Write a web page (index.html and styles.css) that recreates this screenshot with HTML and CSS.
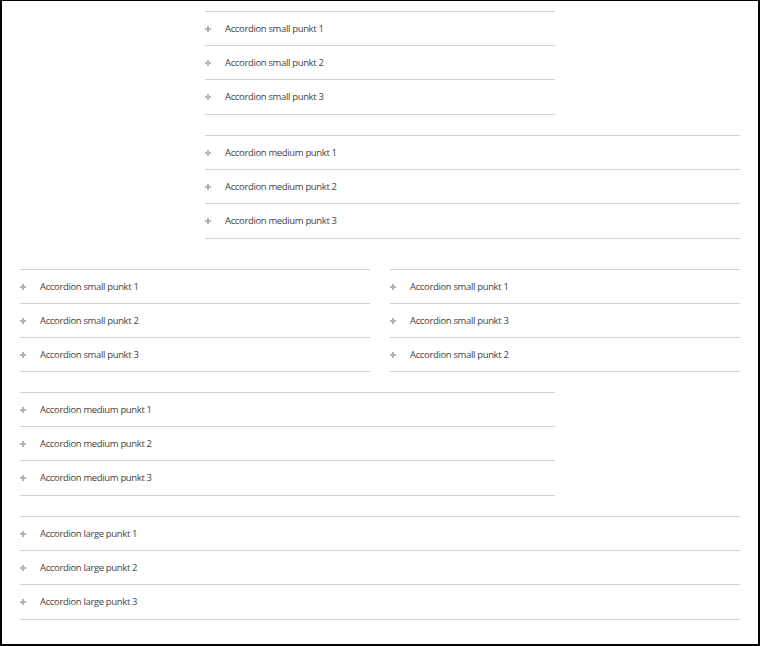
FILE: index.html
```html
<!DOCTYPE html>
<html lang="en">
<head>
    <meta charset="UTF-8">
    <title>Accordion</title>
    <link rel="stylesheet" href="styles.css">
</head>
<body>
    <div class="frame">
        <div class="block-top">
            <ul class="accordion accordion-small">
                <li class="item"><span class="plus"></span>Accordion small punkt 1</li>
                <li class="item"><span class="plus"></span>Accordion small punkt 2</li>
                <li class="item"><span class="plus"></span>Accordion small punkt 3</li>
            </ul>
            <ul class="accordion accordion-medium">
                <li class="item"><span class="plus"></span>Accordion medium punkt 1</li>
                <li class="item"><span class="plus"></span>Accordion medium punkt 2</li>
                <li class="item"><span class="plus"></span>Accordion medium punkt 3</li>
            </ul>
        </div>

        <div class="columns">
            <ul class="accordion">
                <li class="item"><span class="plus"></span>Accordion small punkt 1</li>
                <li class="item"><span class="plus"></span>Accordion small punkt 2</li>
                <li class="item"><span class="plus"></span>Accordion small punkt 3</li>
            </ul>
            <ul class="accordion">
                <li class="item"><span class="plus"></span>Accordion small punkt 1</li>
                <li class="item"><span class="plus"></span>Accordion small punkt 3</li>
                <li class="item"><span class="plus"></span>Accordion small punkt 2</li>
            </ul>
        </div>

        <ul class="accordion accordion-medium">
            <li class="item"><span class="plus"></span>Accordion medium punkt 1</li>
            <li class="item"><span class="plus"></span>Accordion medium punkt 2</li>
            <li class="item"><span class="plus"></span>Accordion medium punkt 3</li>
        </ul>
        <ul class="accordion accordion-large">
            <li class="item"><span class="plus"></span>Accordion large punkt 1</li>
            <li class="item"><span class="plus"></span>Accordion large punkt 2</li>
            <li class="item"><span class="plus"></span>Accordion large punkt 3</li>
        </ul>
    </div>
</body>
</html>
```

FILE: styles.css
```css
html, body {
    margin: 0;
    padding: 0;
    background-color: #fff;
}
body {
    font-family: 'Open Sans', sans-serif;
    color: #444;
}
.frame {
    box-sizing: border-box;
    width: 760px;
    height: 646px;
    border: 2px solid #000;
    border-top-width: 1px;
    padding: 10px 18px 0 18px;
    display: flex;
    flex-direction: column;
    gap: 20px;
}
.block-top {
    display: flex;
    flex-direction: column;
    gap: 20px;
    padding-left: 185px;
    margin-bottom: 10px;
}
.columns {
    display: grid;
    grid-template-columns: 350px 350px;
    gap: 20px;
}
.accordion {
    list-style: none;
    margin: 0;
    padding: 0 0 1px 0;
    border-bottom: 1px solid #d2d2d2;
}
.columns .accordion {
    padding-bottom: 0;
}
.accordion-small {
    width: 350px;
}
.accordion-medium {
    width: 535px;
}
.accordion-large {
    width: 720px;
}
.item {
    box-sizing: border-box;
    height: 34px;
    border-top: 1px solid #d2d2d2;
    display: flex;
    align-items: center;
    font-size: 9.5px;
    letter-spacing: -0.35px;
}
.plus {
    position: relative;
    width: 6px;
    height: 6px;
    margin-right: 14px;
}
.plus::before,
.plus::after {
    content: '';
    position: absolute;
    background-color: #b4b4b4;
}
.plus::before {
    left: 0;
    top: 2px;
    width: 6px;
    height: 2px;
}
.plus::after {
    left: 2px;
    top: 0;
    width: 2px;
    height: 6px;
}
```
